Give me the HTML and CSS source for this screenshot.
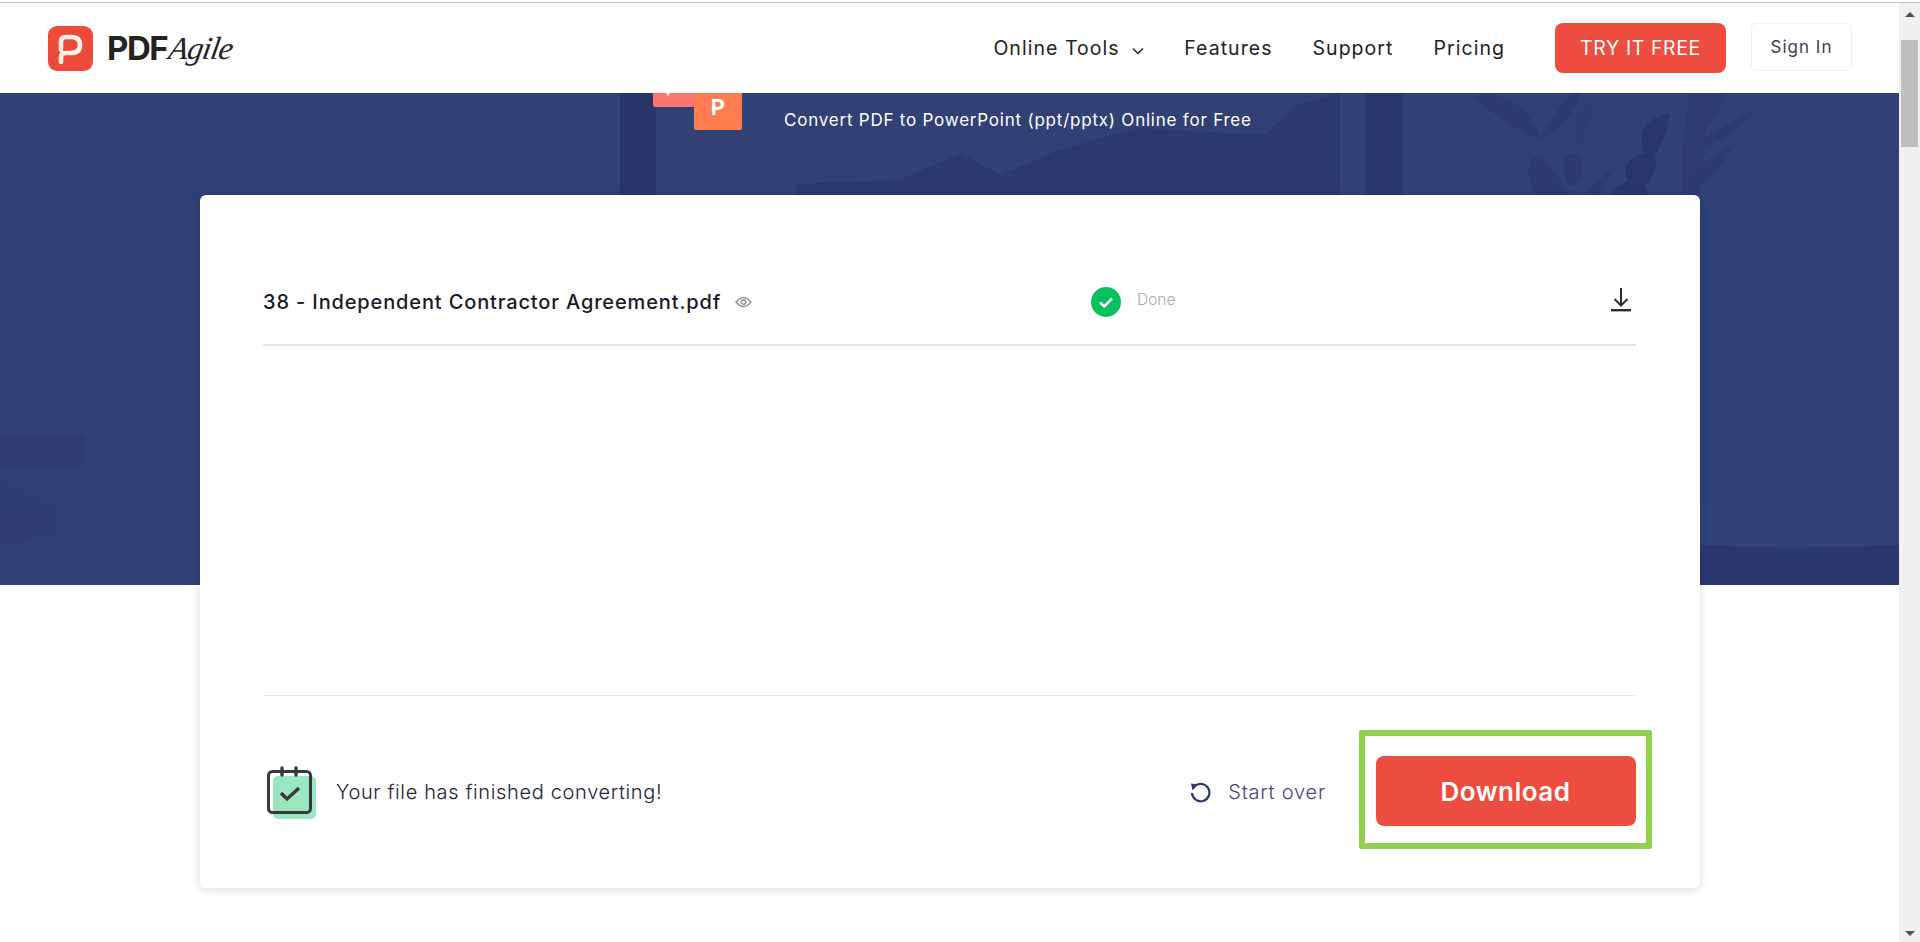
FILE: index.html
```html
<!DOCTYPE html>
<html lang="en">
<head>
<meta charset="utf-8">
<title>PDF Agile</title>
<link rel="stylesheet" href="styles.css">
</head>
<body>
<div class="topline"></div>
<div class="frame">
  <div class="main">
    <header class="header">
      <a class="logo">
        <svg class="logo-mark" width="45" height="45" viewBox="0 0 45 45"><rect width="45" height="45" rx="9" fill="#ee4a3b"/><path d="M13 24V16Q13 11 18 11H23Q32 11 32 19Q32 27 23 27H18Q13 27 13 32V36" fill="none" stroke="#fdf0e6" stroke-width="4.6" stroke-linecap="round"/></svg>
        <span class="logo-pdf">PDF</span><span class="logo-agile">Agile</span>
      </a>
      <nav class="nav">
        <a class="nav-item nav-tools">Online Tools <svg width="12" height="8" viewBox="0 0 12 8"><path d="M1 1.500L6 6.500L11 1.500" fill="none" stroke="#222" stroke-width="1.500"/></svg></a>
        <a class="nav-item">Features</a>
        <a class="nav-item">Support</a>
        <a class="nav-item">Pricing</a>
      </nav>
      <a class="try">TRY IT FREE</a>
      <a class="signin">Sign In</a>
    </header>

    <section class="hero">
      <svg class="hero-art" width="1899" height="492" viewBox="0 93 1899 492">
        <rect x="0" y="93" width="1899" height="492" fill="#314075"/>
        <rect x="620" y="93" width="36" height="102" fill="#273569"/>
        <rect x="1366" y="93" width="36" height="102" fill="#2a386f"/>
        <rect x="1340" y="93" width="26" height="102" fill="#324176"/>
        <path d="M796 184L900 180L961 153L1000 175L1060 150L1109 136L1135 128L1173 130L1265 135L1296 105L1340 93V195H796Z" fill="#2b396f"/>
        <g fill="#2c3a71">
          <path d="M1473 97Q1490 90 1515 103Q1535 118 1540 140Q1505 125 1473 97Z"/>
          <path d="M1540 140Q1555 110 1572 93H1580Q1575 120 1540 140Z"/>
          <path d="M1578 120Q1590 100 1592 105Q1590 130 1572 160Z" fill="#2f3e74"/>
          <path d="M1530 160Q1540 150 1560 180L1570 195H1535Q1525 175 1530 160Z"/>
          <path d="M1567 155Q1585 150 1583 170Q1578 185 1570 187Q1558 170 1567 155Z"/>
          <path d="M1585 195Q1600 175 1615 168Q1605 185 1598 195Z"/>
          <path d="M1690 93H1725Q1720 115 1705 130L1700 195H1682Q1680 150 1690 93Z" fill="#2d3b72"/>
          <path d="M1642 132Q1655 112 1670 115Q1665 145 1650 160Q1640 150 1642 132Z" fill="#28366b"/>
          <path d="M1625 165Q1640 150 1655 155Q1660 175 1640 190Q1625 185 1625 165Z" fill="#28366b"/>
          <path d="M1610 195Q1620 180 1640 180L1650 195Z" fill="#28366b"/>
          <path d="M1700 140Q1725 125 1755 110Q1730 140 1700 150Z"/>
          <path d="M1690 175Q1710 155 1735 145Q1720 170 1695 190Z"/>
        </g>
        <path d="M0 435H85V465L0 470Z" fill="#2e3c72"/>
        <path d="M0 475L55 510L0 525Z" fill="#303f74"/>
        <path d="M0 515L55 505V535L0 545Z" fill="#303e74"/>
        <path d="M1700 545Q1800 550 1899 545V585H1700Z" fill="#2a386f"/>
        <path d="M1700 503Q1800 505 1899 502V545H1700Z" fill="#324176"/>
      </svg>
      <div class="hero-head">
        <div class="hero-icon">
          <svg width="89" height="37" viewBox="0 0 89 37"><rect x="0" y="-20" width="48" height="34" rx="2" fill="#fd756c"/><path d="M13 0L15 3L17 0Z" fill="#fff"/><rect x="41" y="-20" width="48" height="57" rx="2" fill="#fe7e52"/></svg>
          <div class="hero-p">P</div>
        </div>
        <p class="hero-sub">Convert PDF to PowerPoint (ppt/pptx) Online for Free</p>
      </div>
    </section>

    <section class="card">
      <div class="file-row">
        <div class="file-name">
          <span class="name-text">38 - Independent Contractor Agreement.pdf</span>
          <svg width="17" height="12" viewBox="0 0 17 12"><path d="M1 6Q8.500 -3 16 6Q8.500 15 1 6Z" fill="none" stroke="#999" stroke-width="1.500"/><circle cx="8.500" cy="6" r="2.300" fill="none" stroke="#999" stroke-width="1.500"/></svg>
        </div>
        <div class="file-status">
          <svg width="30" height="30" viewBox="0 0 30 30"><circle cx="15" cy="15" r="15" fill="#06c15f"/><path d="M9 15.500L13.300 19.500L21 11.500" fill="none" stroke="#fff" stroke-width="2.600"/></svg>
          <span class="done">Done</span>
        </div>
        <svg class="file-dl" width="20" height="24" viewBox="0 0 20 24"><path d="M10 0V17M3.500 11L10 17.500L16.500 11" fill="none" stroke="#2f2b36" stroke-width="2"/><rect x="0" y="21" width="20" height="2.400" fill="#2f2b36"/></svg>
      </div>
      <div class="file-space"></div>
      <div class="card-foot">
        <div class="finished">
          <svg width="49" height="53" viewBox="0 0 49 53"><rect x="6" y="10" width="43" height="43" rx="5" fill="#9ae6c0"/><rect x="1.500" y="5.500" width="42" height="41" rx="4" fill="none" stroke="#39363f" stroke-width="3"/><path d="M15 2V9M29 2V9" stroke="#39363f" stroke-width="3.400" stroke-linecap="round"/><path d="M14 27L20 33L32 22" fill="none" stroke="#39363f" stroke-width="3.400"/></svg>
          <span class="finished-text">Your file has finished converting!</span>
        </div>
        <a class="start-over">
          <svg width="21" height="21" viewBox="0 0 21 21"><path d="M4.500 4.500A8.700 8.700 0 1 1 2 11" fill="none" stroke="#2b3a70" stroke-width="2.200"/><path d="M1 1.500L8 2.500L2.500 8.500Z" fill="#2b3a70"/></svg>
          <span>Start over</span>
        </a>
        <div class="highlight"><a class="download">Download</a></div>
      </div>
    </section>
  </div>
  <aside class="scrollbar">
    <span class="arrow-up"></span>
    <span class="thumb"></span>
    <span class="arrow-down"></span>
  </aside>
</div>
</body>
</html>
```

FILE: styles.css
```css
* { box-sizing: border-box; }
html, body { margin: 0; padding: 0; height: 942px; overflow: hidden; background: #fff; }
body { font-family: Inter, "Liberation Sans", sans-serif; color: #222; }

.topline { height: 3px; background: #fff; border-bottom: 1px solid #c4c4c4; }
.frame { display: flex; height: 939px; }
.main { width: 1899px; flex: none; }

.header { height: 90px; display: flex; align-items: center; padding: 0 47px 0 48px; background: #fff; }
.logo { display: flex; align-items: center; }
.logo-mark { flex: none; margin-right: 14px; }
.logo-pdf { font-size: 33px; font-weight: 700; letter-spacing: -1.500px; color: #232323; }
.logo-agile { font-family: "Liberation Serif", serif; font-style: italic; font-size: 32px; letter-spacing: -0.800px; color: #232323; margin-left: 2px; transform: skewX(-10deg); }

.nav { display: flex; align-items: center; gap: 40px; margin-left: auto; margin-right: 50px; }
.nav-item { font-size: 19.500px; letter-spacing: 1.050px; color: #222; white-space: nowrap; }
.nav-tools svg { margin-left: 6px; }

.try { width: 171px; height: 50px; background: #ef4d40; color: #fff; border-radius: 8px; font-size: 19.500px; letter-spacing: 0.600px; display: flex; align-items: center; justify-content: center; margin-right: 25px; }
.signin { width: 101px; height: 48px; margin-top: -2px; border: 1px solid #f0f0f0; border-radius: 5px; font-size: 17px; letter-spacing: 1px; color: #3a4250; display: flex; align-items: center; justify-content: center; }

.hero { height: 492px; position: relative; overflow: hidden; }
.hero-art { position: absolute; left: 0; top: 0; }
.hero-head { position: relative; display: flex; align-items: flex-start; padding-left: 653px; }
.hero-icon { flex: none; position: relative; width: 89px; height: 37px; }
.hero-icon svg { display: block; }
.hero-p { position: absolute; left: 41px; right: 0; top: 1px; font-size: 22px; font-weight: 700; color: #fff; text-align: center; }
.hero-sub { margin: 16px 0 0 42px; font-size: 17px; line-height: 22px; letter-spacing: 0.780px; color: #fff; white-space: nowrap; }

.card { position: relative; width: 1500px; height: 693px; margin: -390px 0 0 200px; padding: 60px 64px 0 63px; background: #fff; border-radius: 6px; box-shadow: 0 2px 10px rgba(0, 0, 0, 0.14); }
.file-row { display: flex; align-items: center; height: 91px; border-bottom: 2px solid #e4e4e4; padding-top: 5px; }
.file-name { width: 828px; display: flex; align-items: center; gap: 14px; }
.name-text { font-size: 20px; font-weight: 500; letter-spacing: 0.860px; color: #1a1a24; white-space: nowrap; }
.file-status { display: flex; align-items: center; gap: 16px; }
.done { font-size: 15.500px; color: #a9a9a9; font-weight: 300; margin-top: -6px; }
.file-dl { margin-left: auto; margin-right: 5px; margin-top: -4px; }
.file-space { height: 350px; border-bottom: 1px solid #e4e4e4; }

.card-foot { height: 192px; display: flex; align-items: center; padding-left: 4px; }
.finished { display: flex; align-items: center; gap: 20px; }
.finished-text { font-size: 20px; font-weight: 300; letter-spacing: 0.650px; color: #22223a; }
.start-over { display: flex; align-items: center; gap: 17px; margin-left: auto; margin-right: 33px; font-size: 20px; font-weight: 300; letter-spacing: 0.800px; color: #3a4c80; }
.highlight { width: 293px; height: 119px; align-self: flex-start; margin: 34px -16px 0 0; padding-top: 3px; border: 6px solid #92d050; border-radius: 2px; display: flex; align-items: center; justify-content: center; }
.download { width: 260px; height: 70px; background: #ec4d3f; color: #fff; border-radius: 8px; font-size: 26px; font-weight: 600; letter-spacing: 0.500px; display: flex; align-items: center; justify-content: center; }

.scrollbar { width: 21px; flex: none; background: #f0f0f0; display: flex; flex-direction: column; align-items: center; }
.arrow-up { width: 0; height: 0; border: 5px solid transparent; border-top: 0; border-bottom: 5px solid #505050; margin-top: 9px; }
.thumb { width: 17px; height: 107px; background: #bebebe; margin-top: 23px; }
.arrow-down { width: 0; height: 0; border: 5px solid transparent; border-bottom: 0; border-top: 5px solid #505050; margin-top: auto; margin-bottom: 6px; }
```
